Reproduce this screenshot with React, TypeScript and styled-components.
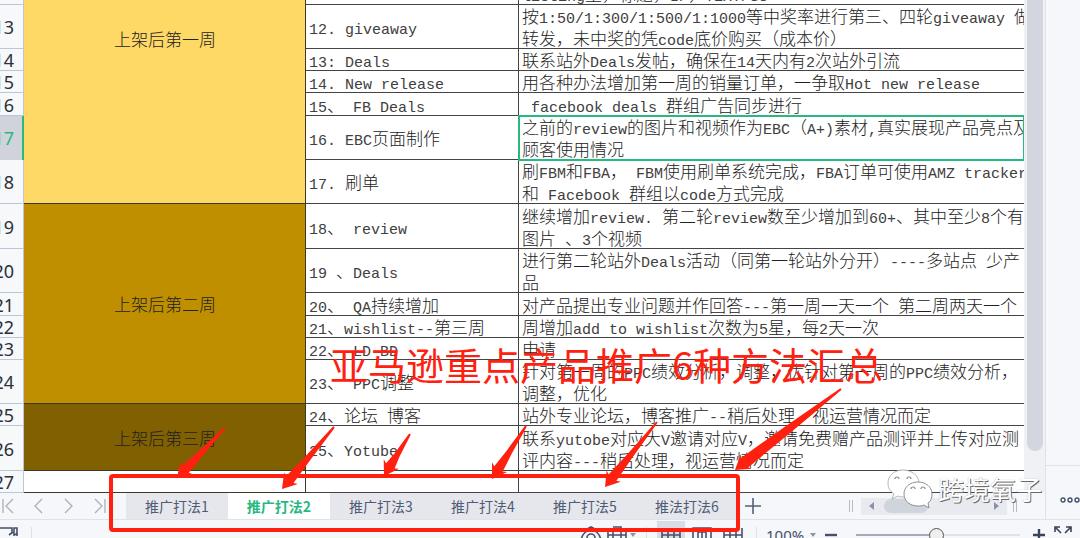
import React from 'react';
import styled, { createGlobalStyle } from 'styled-components';

const GlobalStyle = createGlobalStyle`
  * { box-sizing: border-box; }
  body { margin: 0; background: #f5f7fa; }
  button, input, select { font: inherit; color: inherit; margin: 0; padding: 0; border: 0; background: none; }
`;

const INK = '#222';
const RED = '#ff2010';
const GREEN = '#27b980';

const Page = styled.div`
  position: relative;
  display: flex;
  flex-direction: column;
  height: 100vh;
  overflow: hidden;
  background: #f5f7fa;
  font-family: 'Noto Sans', 'Noto Sans CJK SC', sans-serif;
  color: #46506a;
`;

const Workspace = styled.div`
  flex: 1;
  display: flex;
  min-height: 0;
`;

const Main = styled.main`
  flex: 1;
  display: flex;
  flex-direction: column;
  min-width: 0;
`;

const SheetArea = styled.div`
  flex: 1;
  display: flex;
  min-height: 0;
`;

const SheetView = styled.div`
  flex: 1;
  display: flex;
  flex-direction: column;
  justify-content: flex-end;
  min-width: 0;
  overflow: hidden;
  background: #fff;
`;

const Grid = styled.table`
  flex: none;
  width: 100%;
  table-layout: fixed;
  border-spacing: 0;
  color: ${INK};
  font-family: 'Noto Sans CJK SC', sans-serif;
  font-size: 17px;
  font-weight: 300;
  line-height: 22px;
`;

const Row = styled.tr<{ $height: number }>`
  height: ${(p) => p.$height}px;
`;

const RowHead = styled.th<{ $current?: boolean }>`
  padding: 0;
  overflow: hidden;
  background: ${(p) => (p.$current ? '#d0d3da' : '#f6f8fa')};
  color: ${(p) => (p.$current ? GREEN : '#2c3038')};
  box-shadow: ${(p) =>
    p.$current ? `inset -2px 0 ${GREEN}` : 'inset -1px -1px #bcc6da'};
  font: 400 18px/22px 'Noto Sans', sans-serif;
`;

const RowNumber = styled.div`
  display: flex;
  justify-content: flex-end;
  padding-right: 10px;
`;

const WeekCell = styled.td<{ $fill: string }>`
  padding: 0;
  background: ${(p) => p.$fill};
  box-shadow: inset -1px -1px #3c3826;
  text-align: center;
`;

const Cell = styled.td`
  padding: 0 0 0 3px;
  overflow: hidden;
  white-space: pre;
  box-shadow: inset -1px -1px #444;
`;

const DetailCell = styled(Cell)<{ $selected?: boolean; $bottom?: boolean }>`
  position: relative;
  z-index: ${(p) => (p.$selected ? 1 : 'auto')};
  vertical-align: ${(p) => (p.$bottom ? 'bottom' : 'middle')};
  box-shadow: inset 0 -1px #444;
  outline: ${(p) => (p.$selected ? `2px solid ${GREEN}` : 'none')};
  outline-offset: -1px;
`;

const Line = styled.div`
  height: 22px;
`;

const Latin = styled.span`
  color: #404040;
  font-family: 'Liberation Mono', monospace;
  font-size: 15px;
`;

const VerticalScroll = styled.div`
  flex: none;
  width: 21px;
  padding: 0 2px 42px 3px;
  background: #f0f1f5;
`;

const VerticalThumb = styled.div`
  height: 100%;
  border-radius: 0 0 8px 8px;
  background: #d3d6df;
`;

const SidePanel = styled.aside`
  flex: none;
  display: flex;
  flex-direction: column;
  justify-content: flex-end;
  width: 35px;
  border-left: 1px solid #dfe2e8;
`;

const MoreButton = styled.button`
  height: 54px;
  padding: 8px 0 0 14px;
  border-top: 1px solid #dfe2e8;
  text-align: left;
`;

const TabBar = styled.div`
  flex: none;
  display: flex;
  align-items: center;
  height: 26px;
`;

const SheetNav = styled.div`
  flex: none;
  display: flex;
  width: 126px;
`;

const IconButton = styled.button<{ $width: number; $fill?: string }>`
  flex: none;
  display: flex;
  justify-content: center;
  align-items: center;
  width: ${(p) => p.$width}px;
  height: 28px;
  background: ${(p) => p.$fill ?? 'none'};
`;

const Tab = styled.button<{ $active?: boolean }>`
  flex: none;
  width: 102px;
  height: 26px;
  background: ${(p) => (p.$active ? '#fff' : '#e6e7ed')};
  color: ${(p) => (p.$active ? GREEN : '#505a74')};
  font-family: 'Noto Sans CJK SC', sans-serif;
  font-size: 14px;
  font-weight: ${(p) => (p.$active ? 700 : 400)};
  line-height: 26px;
`;

const Spacer = styled.div`
  flex: 1;
`;

const Grip = styled.div`
  flex: none;
  width: 4px;
  height: 12px;
  border: solid #b4bccb;
  border-width: 0 1px;
`;

const HorizontalScroll = styled.div`
  flex: none;
  display: flex;
  justify-content: space-between;
  align-items: center;
  width: 146px;
  height: 17px;
  margin: 0 6px 0 8px;
  padding: 0 8px;
  background: #e8eaef;
`;

const HorizontalThumb = styled.div`
  width: 44px;
  height: 14px;
  margin: 0 56px 0 0;
  border-radius: 7px;
  background: #d0d4dd;
`;

const ScrollEnd = styled.div`
  flex: none;
  width: 28px;
`;

const StatusBar = styled.footer`
  flex: none;
  height: 19px;
  overflow: hidden;
  border-top: 1px solid #dfe2e8;
`;

const StatusRow = styled.div`
  display: flex;
  align-items: center;
  height: 30px;
`;

const Divider = styled.div<{ $gap: number }>`
  flex: none;
  width: 1px;
  height: 16px;
  margin: 0 ${(p) => p.$gap}px;
  background: #dde0e7;
`;

const ZoomSelect = styled.select`
  flex: none;
  width: 40px;
  appearance: none;
  font-size: 15px;
  line-height: 22px;
`;

const ZoomSlider = styled.input`
  flex: none;
  width: 164px;
  height: 16px;
  margin: 0 12px 0 14px;
  appearance: none;
  &::-webkit-slider-runnable-track {
    height: 2px;
    background: linear-gradient(to right, #a3abbb 49%, #dfe2e9 49%);
  }
  &::-webkit-slider-thumb {
    appearance: none;
    width: 15px;
    height: 15px;
    margin-top: -6px;
    border: 1px solid #555;
    border-radius: 50%;
    background: #efefef;
  }
`;

const Annotation = styled.svg`
  position: absolute;
  top: 0;
  left: 0;
  pointer-events: none;
`;

const Headline = styled.div`
  position: absolute;
  top: 342px;
  left: 330px;
  color: ${RED};
  font-family: 'Noto Sans CJK SC', sans-serif;
  font-size: 38px;
  line-height: 44px;
  white-space: nowrap;
`;

const Watermark = styled.div`
  position: absolute;
  top: 468px;
  left: 886px;
  display: flex;
  align-items: center;
  gap: 4px;
  color: #fff;
  font-family: 'Noto Sans CJK SC', sans-serif;
  font-size: 26px;
  font-weight: 400;
  line-height: 42px;
  text-shadow: 1px 1px 0 #6b6b6b, 0 0 1px #999;
  white-space: nowrap;
`;

type SheetRow = {
  no: number;
  height: number;
  week?: { label: string; fill: string; span: number };
  task: string;
  detail: string[];
};

const rows: SheetRow[] = [
  { no: 12, height: 131, week: { label: '上架后第一周', fill: '#ffd966', span: 7 }, task: '', detail: ['listing里，标题，IP，TEXT/SU'] },
  { no: 13, height: 44, task: '12. giveaway', detail: ['按1:50/1:300/1:500/1:1000等中奖率进行第三、四轮giveaway 做', '转发，未中奖的凭code底价购买（成本价）'] },
  { no: 14, height: 22, task: '13: Deals', detail: ['联系站外Deals发帖，确保在14天内有2次站外引流'] },
  { no: 15, height: 22, task: '14. New release', detail: ['用各种办法增加第一周的销量订单，一争取Hot new release'] },
  { no: 16, height: 23, task: '15、 FB Deals', detail: [' facebook deals 群组广告同步进行'] },
  { no: 17, height: 44, task: '16. EBC页面制作', detail: ['之前的review的图片和视频作为EBC（A+)素材,真实展现产品亮点及', '顾客使用情况'] },
  { no: 18, height: 44, task: '17. 刷单', detail: ['刷FBM和FBA， FBM使用刷单系统完成，FBA订单可使用AMZ tracker', '和 Facebook 群组以code方式完成'] },
  { no: 19, height: 45, week: { label: '上架后第二周', fill: '#bf8f00', span: 6 }, task: '18、 review', detail: ['继续增加review. 第二轮review数至少增加到60+、其中至少8个有', '图片 、3个视频'] },
  { no: 20, height: 44, task: '19 、Deals', detail: ['进行第二轮站外Deals活动（同第一轮站外分开）----多站点 少产', '品'] },
  { no: 21, height: 23, task: '20、 QA持续增加', detail: ['对产品提出专业问题并作回答---第一周一天一个 第二周两天一个'] },
  { no: 22, height: 22, task: '21、wishlist--第三周', detail: ['周增加add to wishlist次数为5星，每2天一次'] },
  { no: 23, height: 22, task: '22、 LD BD', detail: ['申请'] },
  { no: 24, height: 44, task: '23、 PPC调整', detail: ['针对第一周的PPC绩效分析，调整，优针对第一周的PPC绩效分析，', '调整，优化'] },
  { no: 25, height: 22, week: { label: '上架后第三周', fill: '#806000', span: 2 }, task: '24、论坛 博客', detail: ['站外专业论坛，博客推广--稍后处理，视运营情况而定'] },
  { no: 26, height: 45, task: '25、Yotube', detail: ['联系yutobe对应大V邀请对应V，邀请免费赠产品测评并上传对应测', '评内容---稍后处理，视运营情况而定'] },
  { no: 27, height: 22, week: { label: '', fill: '#fff', span: 1 }, task: '', detail: [] },
];

const tabs = ['推广打法1', '推广打法2', '推广打法3', '推广打法4', '推广打法5', '推法打法6'];

/* Half-width runs are set in the monospaced face, the rest in the CJK one. */
function MixedText({ text }: { text: string }) {
  return (
    <Line>
      {text
        .split(/([\x20-\x7e]+)/)
        .filter(Boolean)
        .map((run, i) => (/^[\x20-\x7e]/.test(run) ? <Latin key={i}>{run}</Latin> : run))}
    </Line>
  );
}

function Sheet() {
  return (
    <Grid>
      <colgroup>
        <col style={{ width: 24 }} />
        <col style={{ width: 282 }} />
        <col style={{ width: 213 }} />
        <col />
      </colgroup>
      <tbody>
        {rows.map((r) => (
          <Row key={r.no} $height={r.height}>
            <RowHead scope="row" $current={r.no === 17}>
              <RowNumber>{r.no}</RowNumber>
            </RowHead>
            {r.week && (
              <WeekCell rowSpan={r.week.span} $fill={r.week.fill}>
                {r.week.label}
              </WeekCell>
            )}
            <Cell>{r.task && <MixedText text={r.task} />}</Cell>
            <DetailCell $selected={r.no === 17} $bottom={r.no === 12}>
              {r.detail.map((line) => (
                <MixedText key={line} text={line} />
              ))}
            </DetailCell>
          </Row>
        ))}
      </tbody>
    </Grid>
  );
}

function NavIcon({ d }: { d: string }) {
  return (
    <svg width="14" height="16" viewBox="0 0 14 16" fill="none" stroke="#a9afbb" strokeWidth="1.3">
      <path d={d} />
    </svg>
  );
}

function Caret() {
  return (
    <svg width="6" height="4" viewBox="0 0 6 4" fill="#8d96a8">
      <path d="M0 0h6L3 4z" />
    </svg>
  );
}

function ViewIcon({ d, width = 20 }: { d: string; width?: number }) {
  return (
    <svg width={width} height="18" viewBox={`0 0 ${width} 18`} fill="none" stroke="#46506a" strokeWidth="1.6">
      <path d={d} />
    </svg>
  );
}

function arrowPoints(tail: number[], tip: number[], neck: number) {
  const dx = tail[0] - tip[0];
  const dy = tail[1] - tip[1];
  const len = Math.hypot(dx, dy);
  const at = (along: number, side: number) =>
    `${tip[0] + (dx * along - dy * side) / len},${tip[1] + (dy * along + dx * side) / len}`;
  return [at(0, 0), at(14, 9), at(12, neck), at(len / 2, neck - 2), at(len, 1), at(len, -1), at(len / 2, 2 - neck), at(12, -neck), at(14, -9)].join(' ');
}

const arrows = [
  { tail: [225, 428], tip: [177, 478], neck: 5 },
  { tail: [334, 427], tip: [282, 489], neck: 5 },
  { tail: [410, 434], tip: [384, 476], neck: 5 },
  { tail: [526, 426], tip: [492, 479], neck: 5 },
  { tail: [657, 422], tip: [605, 487], neck: 5 },
  { tail: [841, 389], tip: [735, 470], neck: 6 },
];

export default function App() {
  return (
    <Page>
      <GlobalStyle />
      <Workspace>
        <Main>
          <SheetArea>
            <SheetView>
              <Sheet />
            </SheetView>
            <VerticalScroll>
              <VerticalThumb />
            </VerticalScroll>
          </SheetArea>
          <TabBar>
            <SheetNav>
              <IconButton $width={16} aria-label="First sheet"><NavIcon d="M2 1v14M12 1L5 8l7 7" /></IconButton>
              <IconButton $width={46} aria-label="Previous sheet"><NavIcon d="M10 1L3 8l7 7" /></IconButton>
              <IconButton $width={16} aria-label="Next sheet"><NavIcon d="M2 1l7 7-7 7" /></IconButton>
              <IconButton $width={44} aria-label="Last sheet"><NavIcon d="M2 1l7 7-7 7M12 1v14" /></IconButton>
            </SheetNav>
            {tabs.map((t, i) => (
              <Tab key={t} $active={i === 1}>{t}</Tab>
            ))}
            <IconButton $width={29} aria-label="Add sheet">
              <svg width="16" height="16" viewBox="0 0 16 16" stroke="#56607a" strokeWidth="1.6"><path d="M0 8h16M8 0v16" /></svg>
            </IconButton>
            <Spacer />
            <Grip />
            <HorizontalScroll>
              <svg width="5" height="8" viewBox="0 0 5 8" fill="#8792ad"><path d="M5 0v8L0 4z" /></svg>
              <HorizontalThumb />
              <svg width="5" height="8" viewBox="0 0 5 8" fill="#8792ad"><path d="M0 0v8l5-4z" /></svg>
            </HorizontalScroll>
            <Grip />
            <ScrollEnd />
          </TabBar>
        </Main>
        <SidePanel>
          <MoreButton aria-label="More">
            <svg width="20" height="6" viewBox="0 0 20 6" fill="none" stroke="#46506a" strokeWidth="1.4">
              <circle cx="3" cy="3" r="2" /><circle cx="10" cy="3" r="2" /><circle cx="17" cy="3" r="2" />
            </svg>
          </MoreButton>
        </SidePanel>
      </Workspace>
      <StatusBar>
        <StatusRow>
          <ViewIcon d="M0 2h12v5M14 10V2h3v8M9 9l4-3M15 9l2-2" />
          <Divider $gap={11} />
          <Spacer />
          <IconButton $width={26} aria-label="Eye care">
            <ViewIcon width={24} d="M2 14C5 1 19 1 22 14M8 12a4 4 0 1 1 8 0a4 4 0 1 1-8 0M8 3l4-2 4 2" />
          </IconButton>
          <IconButton $width={26} aria-label="Reading mode"><ViewIcon d="M1 12V4h18v8M6 12V4M14 12V4M1 9h18M6 1h8v3" /></IconButton>
          <Caret />
          <Divider $gap={10} />
          <IconButton $width={28} $fill="#d8dde5" aria-label="Normal view"><ViewIcon d="M1 17V4h18v13M1 9h18M1 14h18M7 4v13M13 4v13" /></IconButton>
          <IconButton $width={34} aria-label="Page layout"><ViewIcon d="M1 17V2h18v15M6 17V6h8v11M10 6v11" /></IconButton>
          <IconButton $width={28} aria-label="Page break view"><ViewIcon d="M1 17V3h12v14M1 9h12M7 3v14M19 2v15M13 9h6" /></IconButton>
          <Divider $gap={9} />
          <ZoomSelect aria-label="Zoom level" defaultValue="100">
            <option value="100">100%</option>
          </ZoomSelect>
          <IconButton $width={14} aria-label="Zoom options"><Caret /></IconButton>
          <IconButton $width={22} aria-label="Zoom out">
            <svg width="12" height="12" viewBox="0 0 12 12" stroke="#46506a" strokeWidth="2.4"><path d="M0 6h12" /></svg>
          </IconButton>
          <ZoomSlider type="range" aria-label="Zoom" min={0} max={100} defaultValue={49} />
          <IconButton $width={14} aria-label="Zoom in">
            <svg width="12" height="12" viewBox="0 0 12 12" stroke="#39435a" strokeWidth="2.4"><path d="M0 6h12M6 0v12" /></svg>
          </IconButton>
          <IconButton $width={34} aria-label="Full screen">
            <svg width="18" height="18" viewBox="0 0 18 18" fill="none" stroke="#39435a" strokeWidth="1.6">
              <path d="M1 6V1h5M1 1l6 6M12 1h5v5M17 1l-6 6M1 12v5h5M17 12v5h-5" />
            </svg>
          </IconButton>
        </StatusRow>
      </StatusBar>

      <Headline>亚马逊重点产品推广6种方法汇总</Headline>
      <Annotation width="1080" height="538" viewBox="0 0 1080 538">
        <rect x="111" y="476" width="627" height="54" rx="2" fill="none" stroke={RED} strokeWidth="4" />
        {arrows.map((a) => (
          <polygon key={a.tip[0]} points={arrowPoints(a.tail, a.tip, a.neck)} fill={RED} />
        ))}
      </Annotation>
      <Watermark>
        <svg width="48" height="42" viewBox="0 0 48 42">
          <g fill="#fff" stroke="#a5a5a5" strokeWidth="0.8">
            <path d="M17 2C8 2 2 8 2 15c0 5 2 8 6 11l-2 5 6-3c2 1 4 1 7 1C28 29 33 22 33 15S26 2 17 2z" />
            <path d="M32 14c-8 0-14 5-14 12s6 12 14 12c2 0 4 0 6-1l5 3-1-5c3-2 4-5 4-9 0-7-6-12-14-12z" stroke="#777" />
          </g>
          <path d="M9 11a2 2 0 0 1 4 0M21 11a2 2 0 0 1 4 0M25 21a2 2 0 0 1 4 0M35 21a2 2 0 0 1 4 0" fill="none" stroke="#888" strokeWidth="1.2" />
        </svg>
        跨境氧子
      </Watermark>
    </Page>
  );
}
